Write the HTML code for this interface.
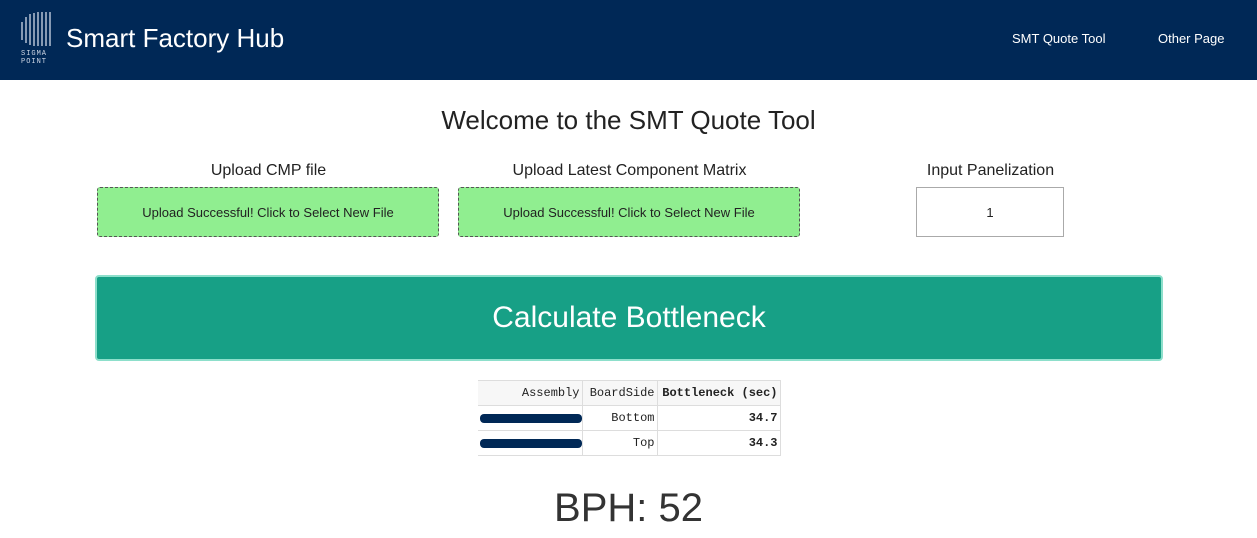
<!DOCTYPE html><html><head><style>
body{margin:0;width:1257px;height:538px;overflow:hidden;background:#fff;font-family:"Liberation Sans",sans-serif;color:#222;position:relative}
.hdr{position:absolute;left:0;top:0;width:1257px;height:80px;background:#002856}
.abs{position:absolute}
.lbl{font-size:16px;text-align:center;top:162px}
.box{position:absolute;top:187px;height:48px;background:#90ee90;border:1px dashed #555;border-radius:3px;font-size:13px;display:flex;align-items:center;justify-content:center;color:#222}
td{font-family:"Liberation Mono",monospace;font-size:12px;padding:0 2px;text-align:right;border-right:1px solid #ddd;border-bottom:1px solid #ddd;height:24px;white-space:nowrap;overflow:hidden}
table{border-collapse:collapse;position:absolute;left:478px;top:380px;border-top:1px solid #ddd;table-layout:fixed;width:302px}
</style></head><body>
<div class="hdr">
<svg class="abs" style="left:20px;top:12px" width="36" height="52">
<g stroke="#cfd8e6" stroke-width="1.3">
<line x1="2" y1="10" x2="2" y2="28"/><line x1="6" y1="5" x2="6" y2="31"/><line x1="10" y1="2" x2="10" y2="33"/><line x1="14" y1="1" x2="14" y2="34"/><line x1="18" y1="0" x2="18" y2="34"/><line x1="22" y1="0" x2="22" y2="34"/><line x1="26" y1="0" x2="26" y2="34"/><line x1="30" y1="0" x2="30" y2="34"/></g>
<text x="1" y="43" font-size="7" fill="#cfd8e6" font-family="Liberation Mono" letter-spacing="1">SIGMA</text>
<text x="1" y="51" font-size="7" fill="#cfd8e6" font-family="Liberation Mono" letter-spacing="1">POINT</text></svg>
<div class="abs" style="left:66px;top:23px;font-size:26px;color:#fff">Smart Factory Hub</div>
<div class="abs" style="left:1012px;top:31px;font-size:13px;color:#fff">SMT Quote Tool</div>
<div class="abs" style="left:1158px;top:31px;font-size:13px;color:#fff">Other Page</div>
</div>
<div class="abs" style="left:0;width:1257px;top:105px;text-align:center;font-size:26px">Welcome to the SMT Quote Tool</div>
<div class="abs lbl" style="left:97px;width:343px">Upload CMP file</div>
<div class="abs lbl" style="left:458px;width:343px">Upload Latest Component Matrix</div>
<div class="abs lbl" style="left:916px;width:149px">Input Panelization</div>
<div class="box" style="left:97px;width:340px">Upload Successful! Click to Select New File</div>
<div class="box" style="left:458px;width:340px">Upload Successful! Click to Select New File</div>
<div class="abs" style="left:916px;top:187px;width:146px;height:48px;border:1px solid #aaa;font-size:13px;display:flex;align-items:center;justify-content:center">1</div>
<div class="abs" style="left:95px;top:275px;width:1064px;height:82px;background:#17a086;border:2px solid #8ddfcb;border-radius:4px;color:#fff;font-size:30px;display:flex;align-items:center;justify-content:center">Calculate Bottleneck</div>
<table>
<colgroup><col style="width:104px"><col style="width:75px"><col style="width:123px"></colgroup>
<tr style="background:#f7f7f7"><td>Assembly</td><td>BoardSide</td><td style="font-weight:bold">Bottleneck (sec)</td></tr>
<tr><td><div style="height:9px;background:#002856;border-radius:4px;width:102px"></div></td><td>Bottom</td><td style="font-weight:bold">34.7</td></tr>
<tr><td><div style="height:9px;background:#002856;border-radius:4px;width:102px"></div></td><td>Top</td><td style="font-weight:bold">34.3</td></tr>
</table>
<div class="abs" style="left:0;width:1257px;top:486px;text-align:center;font-size:40px;color:#333">BPH: 52</div>
</body></html>
